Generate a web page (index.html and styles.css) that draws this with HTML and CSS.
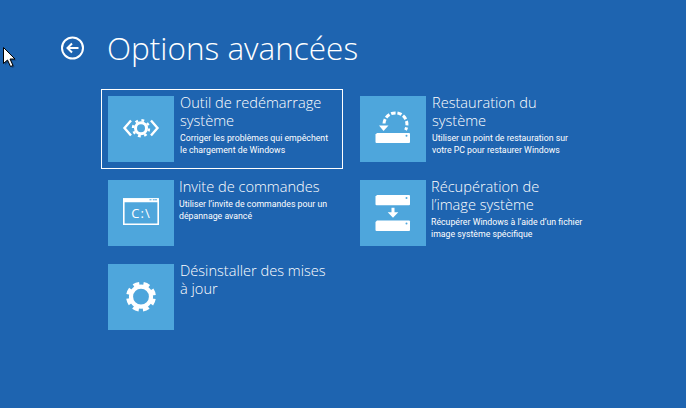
FILE: index.html
```html
<!DOCTYPE html>
<html lang="fr">
<head>
<meta charset="utf-8">
<title>Options avancées</title>
<link rel="stylesheet" href="styles.css">
</head>
<body>
<svg class="cursor" width="18" height="24" viewBox="0 0 18 24"><path d="M3.500 17.500 L3.500 1.500 L15 13 L10 13 L13 19.500 L10.500 20.500 L7.500 14 Z" fill="#0d2c50" opacity=".5" transform="translate(1.500 1.500)"/><path d="M3.500 17.500 L3.500 1.500 L15 13 L10 13 L13 19.500 L10.500 20.500 L7.500 14 Z" fill="#fff" stroke="#000" stroke-width="1"/></svg>
<main class="page">
<header class="head">
<svg class="back" width="26" height="26" viewBox="0 0 26 26"><circle cx="13.500" cy="13" r="10.500" fill="none" stroke="#fff" stroke-width="2"/><path d="M19.500 13H8.500M13 8.500 8.500 13l4.500 4.500" fill="none" stroke="#fff" stroke-width="2"/></svg>
<h1 class="title">Options avancées</h1>
</header>
<div class="grid">
<div class="tile selected">
<div class="icon"><svg width="66" height="66" viewBox="0 0 66 66"><path d="M23 24.500 16.500 32l6.500 7.500M43 24.500l6.500 7.500-6.500 7.500" fill="none" stroke="#fff" stroke-width="2.400"/><circle cx="33" cy="32.300" r="5.500" fill="none" stroke="#fff" stroke-width="3"/><circle cx="33" cy="32.300" r="8" fill="none" stroke="#fff" stroke-width="2.400" stroke-dasharray="2.800 3.483" stroke-dashoffset="-0.170"/></svg></div>
<div class="text"><div class="name">Outil de redémarrage système</div><div class="desc">Corriger les problèmes qui empêchent<br>le chargement de Windows</div></div>
</div>
<div class="tile">
<div class="icon"><svg width="66" height="66" viewBox="0 0 66 66"><path d="M24 27.500A11.500 11.500 0 1 1 45.500 34" fill="none" stroke="#fff" stroke-width="3" stroke-dasharray="4.500 1.800"/><path d="M19 29.500h9.500L23.500 35Z" fill="#fff"/><path d="M17 37h32a1 1 0 0 1 1 1v8a1 1 0 0 1-1 1H16.500a1 1 0 0 1-1-1V38.500Z" fill="#fff"/><circle cx="46.500" cy="39.800" r="1" fill="#4ea6dc"/></svg></div>
<div class="text"><div class="name">Restauration du système</div><div class="desc">Utiliser un point de restauration sur<br>votre PC pour restaurer Windows</div></div>
</div>
<div class="tile">
<div class="icon"><svg width="66" height="66" viewBox="0 0 66 66"><path d="M15.800 19h34.400v25.300H15.800Z" fill="none" stroke="#fff" stroke-width="1.600"/><path d="M15 18.300h35.700v4H15Z" fill="#fff"/><path d="M41.500 19.800h2M44.800 19.800h2M47 19.800h2" stroke="#4ea6dc" stroke-width="1" fill="none"/><text class="prompt" x="33" y="38" text-anchor="middle">C:\</text></svg></div>
<div class="text shift"><div class="name">Invite de commandes</div><div class="desc">Utiliser l’invite de commandes pour un<br>dépannage avancé</div></div>
</div>
<div class="tile">
<div class="icon"><svg width="66" height="66" viewBox="0 0 66 66"><path d="M17 15h32a1 1 0 0 1 1 1v8.300a1 1 0 0 1-1 1H16.500a1 1 0 0 1-1-1V16.500Z" fill="#fff"/><circle cx="46.500" cy="18" r="1" fill="#4ea6dc"/><path d="M31.500 27.700h3v4.500h3.800L33 37.700l-5.300-5.500h3.800Z" fill="#fff"/><path d="M17 40.500h32a1 1 0 0 1 1 1v8.500a1 1 0 0 1-1 1H16.500a1 1 0 0 1-1-1V42Z" fill="#fff"/><circle cx="46.500" cy="43.500" r="1" fill="#4ea6dc"/></svg></div>
<div class="text shift"><div class="name">Récupération de l’image système</div><div class="desc">Récupérer Windows à l’aide d’un fichier<br>image système spécifique</div></div>
</div>
<div class="tile">
<div class="icon"><svg width="66" height="66" viewBox="0 0 66 66"><circle cx="33" cy="32.700" r="10" fill="none" stroke="#fff" stroke-width="4.200"/><circle cx="33" cy="32.700" r="13" fill="none" stroke="#fff" stroke-width="3.800" stroke-dasharray="6 4.210" stroke-dashoffset="-2.100"/></svg></div>
<div class="text"><div class="name">Désinstaller des mises à jour</div></div>
</div>
</div>
</main>
</body>
</html>
```
FILE: styles.css
```css
* { box-sizing: border-box; }
html, body { margin: 0; height: 100%; }
body {
  background: #1e64b0;
  color: #fff;
  font-family: "Open Sans", "Noto Sans", "Liberation Sans", sans-serif;
  overflow: hidden;
  position: relative;
}
.cursor { position: absolute; left: 0; top: 46px; }
.page { padding: 26px 0 0 59px; }
.head { display: flex; align-items: center; gap: 22px; height: 44px; }
.back { flex: none; }
.title { margin: 0; font-size: 31.500px; font-weight: 300; line-height: 44px; white-space: nowrap; }
.grid {
  display: grid;
  grid-template-columns: 242px 242px;
  grid-auto-rows: 80px;
  column-gap: 10px;
  row-gap: 4px;
  margin: 19px 0 0 42px;
}
.tile { display: flex; gap: 6px; padding: 6px; border: 1px solid transparent; }
.tile.selected { border-color: #fff; }
.icon { flex: none; width: 66px; height: 66px; background: #4ea6dc; }
.icon svg { display: block; }
.text { width: 152px; margin-top: -3px; }
.text.shift { margin-left: -1px; }
.name { font-size: 14.600px; font-weight: 300; line-height: 18px; }
.desc { font-family: Roboto, "Open Sans", sans-serif; font-size: 8.750px; line-height: 12px; margin-top: 3px; white-space: nowrap; }
.prompt { fill: #fff; font-size: 13px; font-weight: 400; letter-spacing: 1px; font-family: "Open Sans", sans-serif; }
```
